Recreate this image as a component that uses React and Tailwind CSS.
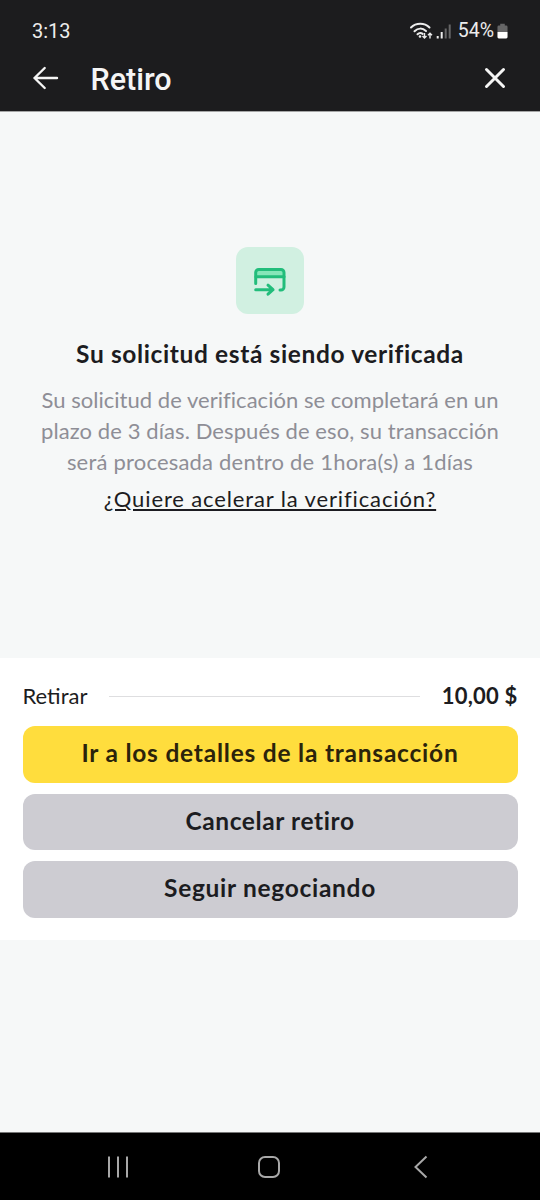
const StatusBar = () => (
  <div className="flex h-[50px] items-center justify-between px-8 pt-3 font-[Roboto,sans-serif]">
    <span className="text-[20px] leading-6 text-[#ececec]">3:13</span>
    <div className="flex items-center">
      <svg width="46" height="20" viewBox="0 0 46 20" fill="none">
        <g stroke="#ececec" strokeWidth="2" strokeLinecap="round">
          <path d="M2 6.500C7 1.500 15.500 1.500 20.500 6.500" />
          <path d="M5.500 10.200C9 6.800 13.500 6.800 17 10" />
          <path d="M8.500 13.300c1.600-1.600 3.600-1.600 5.200-.4" />
        </g>
        <circle cx="11" cy="15.500" r="1.300" fill="#ececec" />
        <path d="M15.500 12v5M13.500 15l2 2 2-2M21 17.500v-5M19 14.300l2-2 2 2" stroke="#ececec" strokeWidth="1.400" />
        <path d="M28.700 15v2.500M32.700 11v6.500" stroke="#ececec" strokeWidth="2" />
        <path d="M36.700 7.500v10M40.700 3.500v14" stroke="#666667" strokeWidth="2" />
      </svg>
      <span className="ml-[3px] text-[19.500px] leading-6 text-[#ececec]">54%</span>
      <svg className="ml-[3px]" width="11" height="17" viewBox="0 0 12 17">
        <path d="M3.500 0h5v2H10a1.500 1.500 0 0 1 1.500 1.500V9H.5V3.500A1.500 1.500 0 0 1 2 2h1.500z" fill="#666667" />
        <path d="M.5 9h11v5.500A1.500 1.500 0 0 1 10 16H2a1.500 1.500 0 0 1-1.500-1.500z" fill="#fff" />
      </svg>
    </div>
  </div>
);

const Header = () => (
  <header className="flex h-[60px] items-center px-8 pb-1">
    <button type="button" aria-label="Volver">
      <svg width="28" height="26" viewBox="0 0 28 26" fill="none" stroke="#f5f5f5" strokeWidth="2.400" strokeLinecap="round" strokeLinejoin="round">
        <path d="M25 13H2.500M12.700 3 2.500 13l10.200 10" />
      </svg>
    </button>
    <h1 className="ml-[30.500px] pt-[3px] font-[Roboto,sans-serif] text-[30.500px] leading-9 font-medium text-[#f5f5f5]">Retiro</h1>
    <button type="button" aria-label="Cerrar" className="ml-auto">
      <svg width="26" height="26" viewBox="0 0 26 26" fill="none" stroke="#f5f5f5" strokeWidth="3" strokeLinecap="round">
        <path d="m4.500 4.500 17 17M21.500 4.500l-17 17" />
      </svg>
    </button>
  </header>
);

const CardArrowIcon = () => (
  <svg className="mt-0.5" width="34" height="30" viewBox="0 0 34 30" fill="none" stroke="#22bd7b" strokeWidth="3" strokeLinecap="round" strokeLinejoin="round">
    <path d="M3 9V5.500A3 3 0 0 1 6 2.500h22a3 3 0 0 1 3 3V9z" fill="#86e6b9" stroke="none" />
    <path d="M2.700 16.500V5.500a3 3 0 0 1 3-3H28a3 3 0 0 1 3 3V20a3 3 0 0 1-3 3h-1" />
    <path d="M3 9.800h28" />
    <path d="M2.700 22.700H20M15 18.200l5 4.500-5 4.500" />
  </svg>
);

const details = [
  { text: 'Su solicitud de verificación se completará en un', style: 'tracking-[0.03px]' },
  { text: 'plazo de 3 días. Después de eso, su transacción', style: 'tracking-[0.09px]' },
  { text: 'será procesada dentro de 1hora(s) a 1días', style: 'tracking-[0.2px]' }
];

const actions = [
  { label: 'Ir a los detalles de la transacción', style: 'bg-[#ffdd3d] text-[#2b230b] tracking-[0.78px]' },
  { label: 'Cancelar retiro', style: 'bg-[#cdccd2] text-[#1c1c21] tracking-[0.6px]' },
  { label: 'Seguir negociando', style: 'bg-[#cdccd2] text-[#1c1c21] tracking-[0.7px]' }
];

const NavigationBar = () => (
  <nav className="flex h-[68px] items-center justify-between border-t border-[#777] bg-black pl-[105px] pr-[111px]">
    <svg width="26" height="26" viewBox="0 0 26 26" stroke="#a8a8a8" strokeWidth="2">
      <path d="M4 2.500v21M13 2.500v21M22 2.500v21" />
    </svg>
    <svg width="26" height="26" viewBox="0 0 26 26" fill="none" stroke="#a8a8a8" strokeWidth="2">
      <rect x="3" y="3" width="20" height="20" rx="6" />
    </svg>
    <svg width="22" height="26" viewBox="0 0 22 26" fill="none" stroke="#a8a8a8" strokeWidth="2">
      <path d="M19.500 2.500 8.500 13l11 10.500" />
    </svg>
  </nav>
);

const App = () => {
  return (
    <div className="flex h-[1200px] w-[540px] flex-col bg-[#f6f8f8] font-[Lato,sans-serif] text-[#1c1c21]">
      <div className="h-[111px] bg-[#1c1c1e]">
        <StatusBar />
        <Header />
      </div>

      <main className="flex h-[547px] flex-col items-center border-t border-[#a5a6a6] pt-[135px] text-center">
        <div className="flex h-[67px] w-[68px] items-center justify-center rounded-xl bg-[#d1f0e1]">
          <CardArrowIcon />
        </div>
        <h2 className="mt-6 text-[24.500px] leading-8 font-bold whitespace-nowrap tracking-[0.62px]">
          Su solicitud está siendo verificada
        </h2>
        <p className="mt-[14px] text-[22px] leading-[31px] whitespace-nowrap text-[#8e8e96]">
          {details.map((line) => (
            <span key={line.text} className={`block ${line.style}`}>{line.text}</span>
          ))}
        </p>
        <a href="#" className="mt-[7px] text-[22px] leading-[30px] whitespace-nowrap underline decoration-[1.5px] underline-offset-2 tracking-[0.87px]">
          ¿Quiere acelerar la verificación?
        </a>
      </main>

      <section className="h-[282px] bg-white px-[22.500px] pt-[23px]">
        <div className="flex h-[30px] items-center text-[22px]">
          <span className="pb-0.5">Retirar</span>
          <div className="mx-[22px] h-px flex-1 bg-[#dedee0]" />
          <span className="pb-0.5 font-bold tracking-[0.2px]">10,00 $</span>
        </div>
        <div className="mt-[15px] flex flex-col gap-[11px]">
          {actions.map((action) => (
            <button
              key={action.label}
              type="button"
              className={`h-[56.500px] rounded-xl pb-0.5 text-[24.500px] leading-8 font-bold ${action.style}`}
            >
              {action.label}
            </button>
          ))}
        </div>
      </section>

      <div className="flex-1" />
      <NavigationBar />
    </div>
  );
};

export default App;
